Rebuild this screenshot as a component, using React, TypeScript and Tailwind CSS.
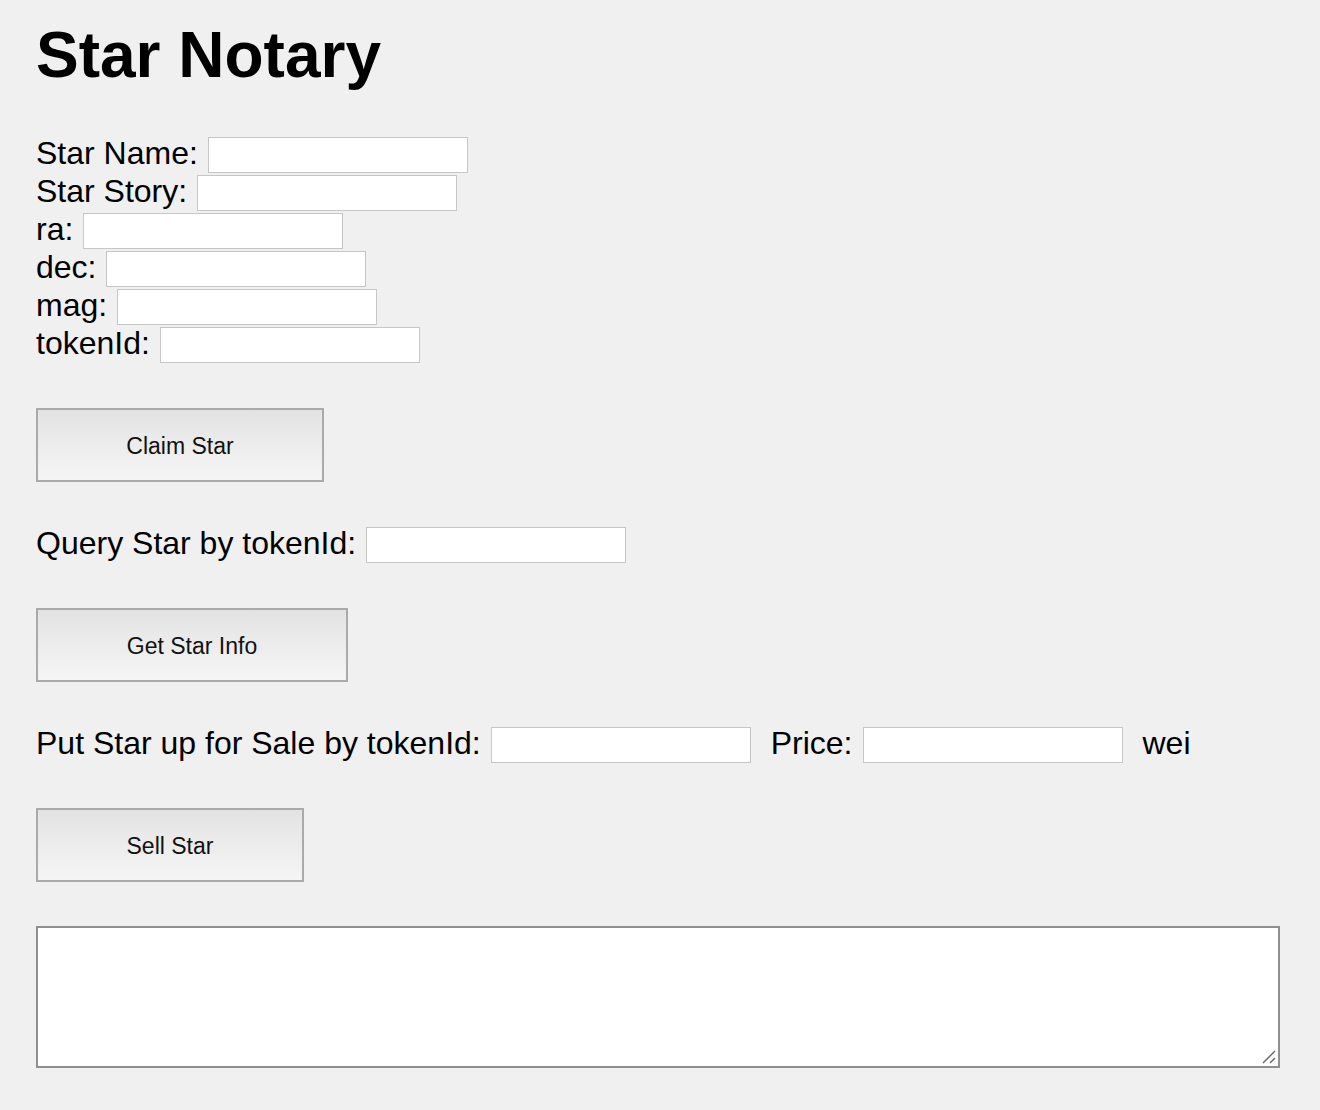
import { useState } from "react";

const Field = ({ label }: { label: string }) => (
  <div className="flex items-center h-[38px] gap-[10px]">
    <span className="pb-[4px]">{label}</span>
    <input
      type="text"
      className="w-[260px] h-[36px] bg-white border border-[#c6c6c6] outline-none px-1"
    />
  </div>
);

const Btn = ({ label, w }: { label: string; w: string }) => (
  <button
    className={`${w} h-[74px] flex items-center justify-center border-2 border-[#aaaaaa] bg-gradient-to-b from-[#e3e3e3] to-[#f5f5f5] text-[23px] text-[#111] leading-none pt-[2px]`}
  >
    {label}
  </button>
);

const App = () => {
  const [status] = useState("");

  return (
    <div className="min-h-screen bg-[#f0f0f0] px-[36px] pt-[23px] pb-[42px] font-['Liberation_Sans',Arial,sans-serif] text-[32px] leading-[38px] text-black">
      <h1 className="text-[64px] font-bold leading-none">Star Notary</h1>

      <div className="mt-[49px] flex flex-col">
        <Field label="Star Name:" />
        <Field label="Star Story:" />
        <Field label="ra:" />
        <Field label="dec:" />
        <Field label="mag:" />
        <Field label="tokenId:" />
      </div>

      <div className="mt-[44px]">
        <Btn label="Claim Star" w="w-[288px]" />
      </div>

      <div className="mt-[44px]">
        <Field label="Query Star by tokenId:" />
      </div>

      <div className="mt-[44px]">
        <Btn label="Get Star Info" w="w-[312px]" />
      </div>

      <div className="mt-[44px] flex items-center h-[38px]">
        <span className="pb-[4px]">Put Star up for Sale by tokenId:</span>
        <input
          type="text"
          className="ml-[10px] w-[260px] h-[36px] bg-white border border-[#c6c6c6] outline-none px-1"
        />
        <span className="ml-[20px] pb-[4px]">Price:</span>
        <input
          type="text"
          className="ml-[10px] w-[260px] h-[36px] bg-white border border-[#c6c6c6] outline-none px-1"
        />
        <span className="ml-[20px] pb-[4px]">wei</span>
      </div>

      <div className="mt-[44px]">
        <Btn label="Sell Star" w="w-[268px]" />
      </div>

      <div className="relative mt-[44px] w-[1244px] h-[142px]">
        <textarea
          readOnly
          value={status}
          className="block w-full h-full resize-none bg-white border-2 border-[#8f8f8f] outline-none text-[20px]"
        />
        <svg
          className="absolute right-[4px] bottom-[4px]"
          width="14"
          height="14"
          viewBox="0 0 14 14"
        >
          <path d="M1 13 L13 1" stroke="#666" strokeWidth="1.5" />
          <path d="M8 13 L13 8" stroke="#666" strokeWidth="1.5" />
        </svg>
      </div>
    </div>
  );
};

export default App;
